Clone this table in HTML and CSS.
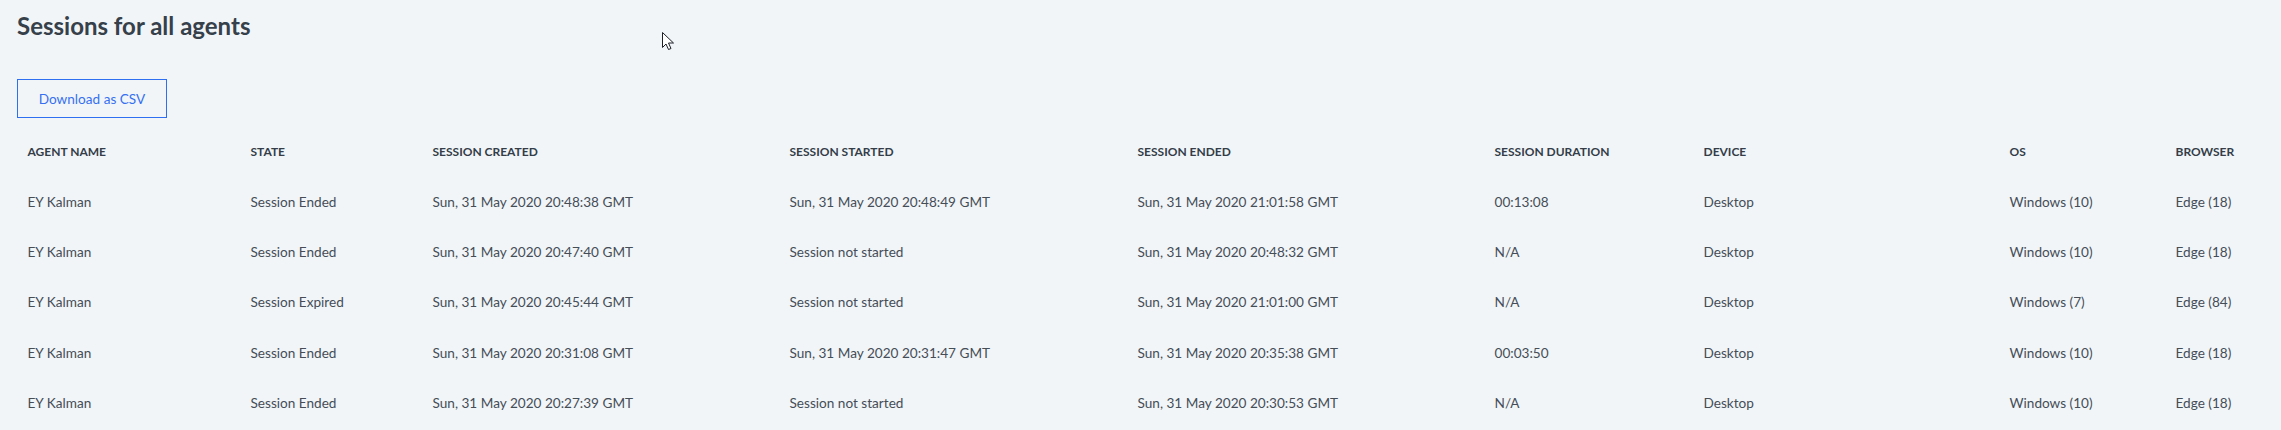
FILE: index.html
```html
<!DOCTYPE html>
<html lang="en">
<head>
<meta charset="utf-8">
<title>Sessions for all agents</title>
<link rel="stylesheet" href="styles.css">
</head>
<body>
<main class="page">
  <h1 class="title">Sessions for all agents</h1>
  <div class="actions">
    <button class="btn-outline" type="button">Download as CSV</button>
  </div>
  <table class="sessions">
    <colgroup>
      <col class="c-agent"><col class="c-state"><col class="c-created"><col class="c-started"><col class="c-ended"><col class="c-duration"><col class="c-device"><col class="c-os"><col class="c-browser">
    </colgroup>
    <thead>
      <tr>
        <th>Agent Name</th><th>State</th><th>Session Created</th><th>Session Started</th><th>Session Ended</th><th>Session Duration</th><th>Device</th><th>OS</th><th>Browser</th>
      </tr>
    </thead>
    <tbody>
      <tr>
        <td>EY Kalman</td><td>Session Ended</td><td>Sun, 31 May 2020 20:48:38 GMT</td><td>Sun, 31 May 2020 20:48:49 GMT</td><td>Sun, 31 May 2020 21:01:58 GMT</td><td>00:13:08</td><td>Desktop</td><td>Windows (10)</td><td>Edge (18)</td>
      </tr>
      <tr>
        <td>EY Kalman</td><td>Session Ended</td><td>Sun, 31 May 2020 20:47:40 GMT</td><td>Session not started</td><td>Sun, 31 May 2020 20:48:32 GMT</td><td>N/A</td><td>Desktop</td><td>Windows (10)</td><td>Edge (18)</td>
      </tr>
      <tr>
        <td>EY Kalman</td><td>Session Expired</td><td>Sun, 31 May 2020 20:45:44 GMT</td><td>Session not started</td><td>Sun, 31 May 2020 21:01:00 GMT</td><td>N/A</td><td>Desktop</td><td>Windows (7)</td><td>Edge (84)</td>
      </tr>
      <tr>
        <td>EY Kalman</td><td>Session Ended</td><td>Sun, 31 May 2020 20:31:08 GMT</td><td>Sun, 31 May 2020 20:31:47 GMT</td><td>Sun, 31 May 2020 20:35:38 GMT</td><td>00:03:50</td><td>Desktop</td><td>Windows (10)</td><td>Edge (18)</td>
      </tr>
      <tr>
        <td>EY Kalman</td><td>Session Ended</td><td>Sun, 31 May 2020 20:27:39 GMT</td><td>Session not started</td><td>Sun, 31 May 2020 20:30:53 GMT</td><td>N/A</td><td>Desktop</td><td>Windows (10)</td><td>Edge (18)</td>
      </tr>
    </tbody>
  </table>
  <svg class="cursor" width="13" height="19" viewBox="0 0 13 19" aria-hidden="true">
    <path d="M0.5 0.5 L0.5 15.5 L4 12 L6.5 17.5 L9 16.5 L6.5 11 L11.5 11 Z" fill="#ffffff" stroke="#1c1f26" stroke-width="1" stroke-linejoin="miter"/>
  </svg>
</main>
</body>
</html>
```

FILE: styles.css
```css
html, body {
  margin: 0;
  padding: 0;
  background: #f1f5f8;
}

body {
  font-family: Lato, "Open Sans", "Liberation Sans", sans-serif;
  color: #454d57;
}

.page {
  position: relative;
  padding: 11px 17px 0 17px;
  height: 419px;
  overflow: hidden;
}

.title {
  margin: 0;
  font-size: 24px;
  font-weight: 700;
  line-height: normal;
  color: #36404a;
}

.actions {
  display: flex;
  margin-top: 39px;
}

.btn-outline {
  box-sizing: border-box;
  font-family: inherit;
  font-size: 13.6px;
  line-height: normal;
  white-space: nowrap;
  color: #3570f2;
  background: transparent;
  border: 1px solid #2d6ff0;
  border-radius: 0;
  padding: 10px 20px;
  width: 150px;
  height: 39px;
  cursor: pointer;
}

.sessions {
  margin-top: 8px;
  width: 2247px;
  border-collapse: collapse;
  table-layout: fixed;
}

.c-agent { width: 223px; }
.c-state { width: 182px; }
.c-created { width: 357px; }
.c-started { width: 348px; }
.c-ended { width: 357px; }
.c-duration { width: 209px; }
.c-device { width: 306px; }
.c-os { width: 166px; }
.c-browser { width: 99px; }

.sessions th,
.sessions td {
  height: 50px;
  padding: 0 0 0 10.5px;
  text-align: left;
  vertical-align: middle;
  white-space: nowrap;
  box-sizing: border-box;
}

.sessions th {
  font-size: 12px;
  font-weight: 700;
  text-transform: uppercase;
  color: #343d48;
}

.sessions td {
  height: 50.2px;
  padding-top: 2px;
  font-size: 13.6px;
  font-weight: 400;
  color: #454d57;
}

.cursor {
  position: absolute;
  left: 662px;
  top: 32px;
}
```
